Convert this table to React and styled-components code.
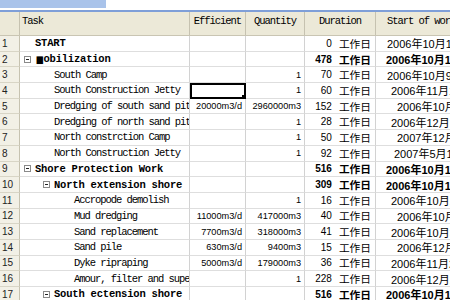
import styled, { createGlobalStyle, css } from 'styled-components';

const GlobalStyle = createGlobalStyle`
  html, body {
    margin: 0;
    padding: 0;
    background: #fff;
    overflow: hidden;
  }
`;

const COLS = '20px 170px 56px 59px 71px 150px';

const rows = [
  { n: 1, task: 'START', level: 1, boldTask: true, dur: '0', start: '2006年10月1日', off: 11 },
  { n: 2, task: 'obilization', mark: true, level: 1, summary: true, dur: '478', start: '2006年10月1日', off: 10 },
  { n: 3, task: 'South Camp', level: 2, qty: '1', dur: '70', start: '2006年10月9日', off: 11 },
  { n: 4, task: 'South Construction Jetty', level: 2, qty: '1', dur: '60', start: '2006年11月10日', off: 15, selected: true },
  { n: 5, task: 'Dredging of south sand pit', level: 2, eff: '20000m3/d', qty: '2960000m3', dur: '152', start: '2006年10月9日', off: 21 },
  { n: 6, task: 'Dredging of north sand pit', level: 2, qty: '1', dur: '28', start: '2006年12月10日', off: 15 },
  { n: 7, task: 'North constrction Camp', level: 2, qty: '1', dur: '50', start: '2007年12月3日', off: 21 },
  { n: 8, task: 'North Construction Jetty', level: 2, qty: '1', dur: '92', start: '2007年5月10日', off: 18 },
  { n: 9, task: 'Shore Protection Work', level: 1, summary: true, dur: '516', start: '2006年10月1日', off: 10 },
  { n: 10, task: 'North extension shore', level: 2, summary: true, dur: '309', start: '2006年10月1日', off: 10 },
  { n: 11, task: 'Accropode demolish', level: 3, qty: '1', dur: '16', start: '2006年10月20日', off: 15 },
  { n: 12, task: 'Mud dredging', level: 3, eff: '11000m3/d', qty: '417000m3', dur: '40', start: '2006年10月9日', off: 21 },
  { n: 13, task: 'Sand replacement', level: 3, eff: '7700m3/d', qty: '318000m3', dur: '41', start: '2006年10月30日', off: 15 },
  { n: 14, task: 'Sand pile', level: 3, eff: '630m3/d', qty: '9400m3', dur: '15', start: '2006年12月9日', off: 21 },
  { n: 15, task: 'Dyke ripraping', level: 3, eff: '5000m3/d', qty: '179000m3', dur: '36', start: '2006年11月20日', off: 15 },
  { n: 16, task: 'Amour, filter and super layer', level: 3, qty: '1', dur: '228', start: '2006年12月20日', off: 15 },
  { n: 17, task: 'South ectension shore', level: 2, summary: true, dur: '516', start: '2006年10月1日', off: 10 },
];

const Sheet = styled.div`
  width: 450px;
  height: 300px;
  overflow: hidden;
  font-family: "Liberation Mono", "Noto Sans CJK SC", monospace;
  color: #000;
`;

const TitleStrip = styled.div`
  display: flex;
  height: 12px;
  border-bottom: 2px solid #7f9fd8;
  box-sizing: border-box;
`;

const TitleTab = styled.div`
  width: 106px;
  height: 8px;
  background: #a9c3ea;
`;

const HeaderRow = styled.div`
  display: grid;
  grid-template-columns: ${COLS};
  height: 24px;
  background: #ece9d8;
  border-bottom: 1px solid #c9c5b3;
  box-sizing: border-box;
`;

const HeaderCell = styled.div`
  border-right: 1px solid #c6c2b0;
  box-sizing: border-box;
  padding: 3px 2px 0;
  font-size: 10.5px;
  letter-spacing: -1.05px;
  white-space: nowrap;
  overflow: hidden;
  text-align: ${(p) => (p.$left ? 'left' : 'center')};
`;

const StartHeader = styled(HeaderCell)`
  text-align: left;
  padding-left: 11px;
`;

const Row = styled.div`
  display: grid;
  grid-template-columns: ${COLS};
  height: 15.7px;
`;

const cellBase = css`
  box-sizing: border-box;
  border-right: 1px solid #d2d2d2;
  border-bottom: 1px solid #dedede;
  white-space: nowrap;
  overflow: hidden;
  display: flex;
  align-items: center;
`;

const NumCell = styled.div`
  ${cellBase};
  background: #f2f0e6;
  border-right: 1px solid #c6c2b0;
  border-bottom: 1px solid #d8d5c6;
  padding-left: 2px;
  font-family: "Liberation Sans", sans-serif;
  font-size: 10px;
  color: #222;
`;

const TaskCell = styled.div`
  ${cellBase};
  padding-left: ${(p) => p.$indent}px;
  font-size: 10.5px;
  letter-spacing: ${(p) => (p.$bold ? '-0.2px' : '-1.05px')};
  font-weight: ${(p) => (p.$bold ? 700 : 400)};
`;

const Mark = styled.span`
  font-family: "DejaVu Sans", sans-serif;
  font-size: 10px;
  letter-spacing: -1px;
  transform: scaleX(0.85);
`;

const Toggle = styled.span`
  flex: none;
  position: relative;
  width: 7px;
  height: 7px;
  margin-right: 4px;
  border: 1px solid #8a8a8a;
  box-sizing: border-box;
  background: #fff;

  &::after {
    content: '';
    position: absolute;
    left: 1px;
    right: 1px;
    top: 2px;
    height: 1px;
    background: #222;
  }
`;

const ValueCell = styled.div`
  ${cellBase};
  position: relative;
  justify-content: flex-end;
  padding-right: 3px;
  font-family: "Liberation Sans", "Noto Sans CJK SC", sans-serif;
  font-size: 9.2px;
  font-weight: ${(p) => (p.$bold ? 700 : 400)};
  ${(p) =>
    p.$selected &&
    css`
      border: 2px solid #000;
      &::after {
        content: '';
        position: absolute;
        right: -2px;
        bottom: -2px;
        width: 4px;
        height: 4px;
        background: #000;
      }
    `}
`;

const DurationCell = styled(ValueCell)`
  padding-right: 4px;
  font-size: 10px;
`;

const Unit = styled.span`
  font-family: "Noto Sans CJK SC", sans-serif;
  font-size: 10.7px;
  margin-left: 7px;
`;

const StartCell = styled.div`
  ${cellBase};
  padding-left: ${(p) => p.$offset}px;
  font-family: "Liberation Sans", "Noto Sans CJK SC", sans-serif;
  font-size: 11px;
  font-weight: ${(p) => (p.$bold ? 700 : 400)};
`;

const indentFor = (r) => {
  const text = [15, 34, 54][r.level - 1];
  return r.summary ? text - 11 : text;
};

export default function App() {
  return (
    <Sheet>
      <GlobalStyle />
      <TitleStrip>
        <TitleTab />
      </TitleStrip>
      <HeaderRow>
        <HeaderCell />
        <HeaderCell $left>Task</HeaderCell>
        <HeaderCell>Efficient</HeaderCell>
        <HeaderCell>Quantity</HeaderCell>
        <HeaderCell>Duration</HeaderCell>
        <StartHeader>Start of work</StartHeader>
      </HeaderRow>
      {rows.map((r) => (
        <Row key={r.n}>
          <NumCell>{r.n}</NumCell>
          <TaskCell $indent={indentFor(r)} $bold={r.summary || r.boldTask}>
            {r.summary && <Toggle />}
            {r.mark && <Mark>■</Mark>}
            {r.task}
          </TaskCell>
          <ValueCell $selected={r.selected}>{r.eff}</ValueCell>
          <ValueCell>{r.qty}</ValueCell>
          <DurationCell $bold={r.summary}>
            {r.dur}
            <Unit>工作日</Unit>
          </DurationCell>
          <StartCell $offset={r.off} $bold={r.summary}>
            {r.start}
          </StartCell>
        </Row>
      ))}
    </Sheet>
  );
}
